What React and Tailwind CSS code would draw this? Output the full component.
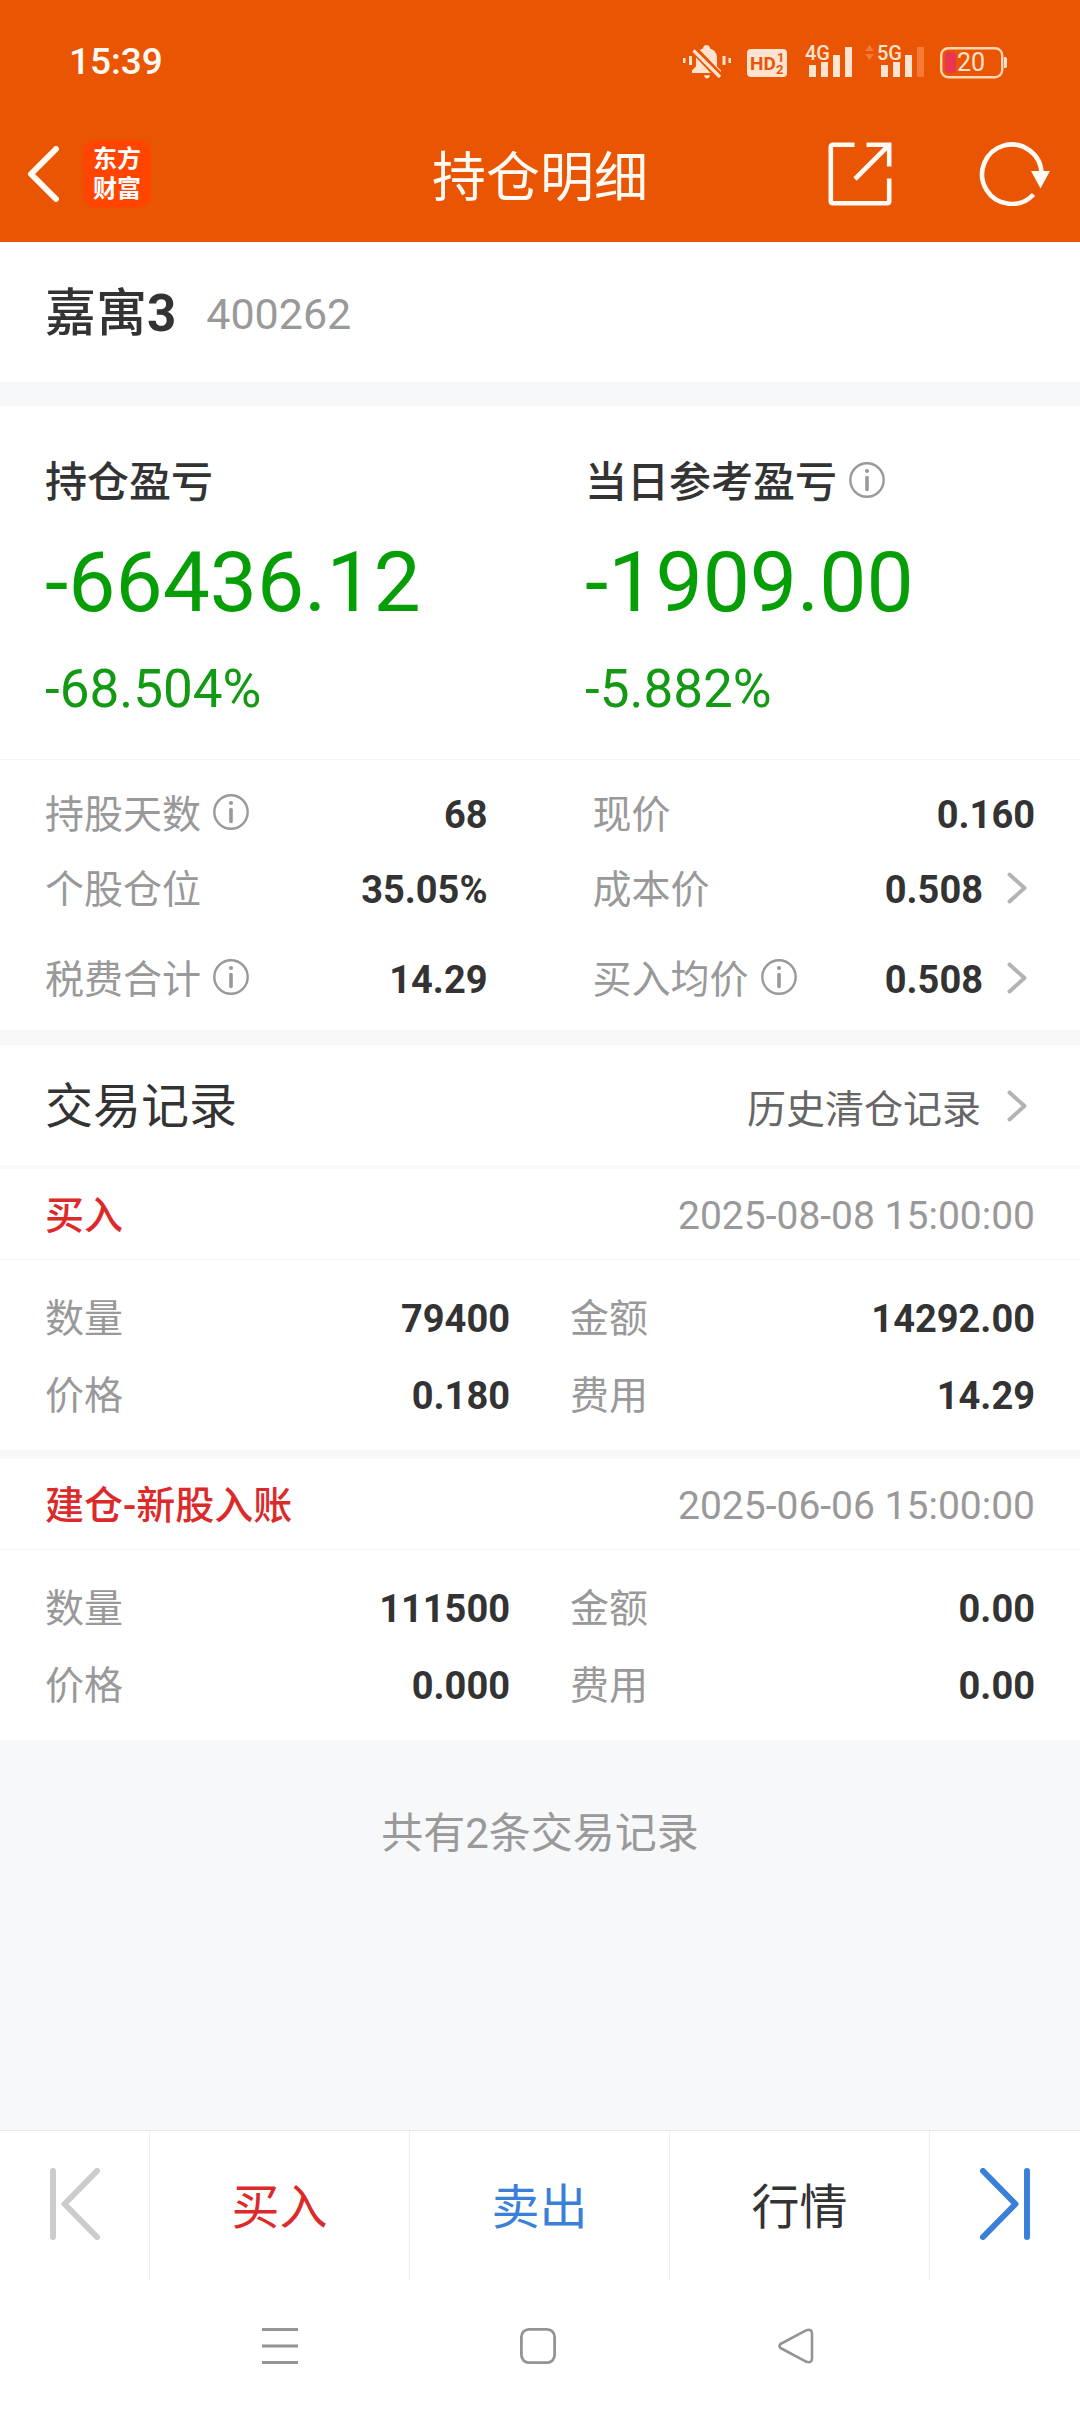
import React from "react";

const stats = [
  [
    { label: "持股天数", info: true, value: "68" },
    { label: "现价", value: "0.160" },
  ],
  [
    { label: "个股仓位", value: "35.05%" },
    { label: "成本价", value: "0.508", more: true },
  ],
  [
    { label: "税费合计", info: true, value: "14.29" },
    { label: "买入均价", info: true, value: "0.508", more: true },
  ],
];

const records = [
  {
    title: "买入",
    time: "2025-08-08 15:00:00",
    fields: [
      ["数量", "79400"],
      ["金额", "14292.00"],
      ["价格", "0.180"],
      ["费用", "14.29"],
    ],
  },
  {
    title: "建仓-新股入账",
    time: "2025-06-06 15:00:00",
    fields: [
      ["数量", "111500"],
      ["金额", "0.00"],
      ["价格", "0.000"],
      ["费用", "0.00"],
    ],
  },
];

function InfoButton({ label }) {
  return (
    <button type="button" aria-label={`${label}说明`} className="shrink-0 pb-[6px]">
      <svg className="block h-9 w-9" viewBox="0 0 36 36" fill="none">
        <circle cx="18" cy="18" r="16.7" stroke="#999" strokeWidth="2.4" />
        <circle cx="18" cy="9" r="2.1" fill="#999" />
        <path d="M18 15.5V27.5" stroke="#999" strokeWidth="3.6" strokeLinecap="round" />
      </svg>
    </button>
  );
}

function Chevron() {
  return (
    <svg className="block h-8 w-[20px] shrink-0" viewBox="0 0 20 32" fill="none">
      <path d="M2.5 2.5L17.5 16L2.5 29.5" stroke="#b3b3b3" strokeWidth="4" strokeLinecap="round" strokeLinejoin="round" />
    </svg>
  );
}

function StatusIcons() {
  return (
    <svg className="block h-[60px] w-[328px]" viewBox="681 32 328 60" fill="#fde3d0">
      <path d="M692 73V70.500l4-4V58c0-5 3-8.500 7-9.500 0-2 1.500-3.500 3.500-3.500s3.500 1.500 3.500 3.500c5 1.500 7 5 7 9.500v8.500l4 4V73z" />
      <path d="M704 75.300h6c-.3 2-1.500 3.200-3 3.200s-2.700-1.200-3-3.200z" />
      <path d="M690 45.500L722 79" stroke="#ea5504" strokeWidth="8" />
      <path d="M693.500 50.500L720 77" stroke="#fde3d0" strokeWidth="3.200" />
      <path d="M683 58h2.500v5H683zM689 56h3v9h-3zM722.500 56h3v9h-3zM728.500 58h2.500v5h-2.500z" />
      <rect x="747" y="49" width="40" height="28" rx="4" />
      <text x="750" y="70" fontSize="19" fontWeight="700" fill="#ea5504">HD</text>
      <text x="777" y="62" fontSize="13" fontWeight="700" fill="#ea5504">1</text>
      <text x="776" y="74" fontSize="13" fontWeight="700" fill="#ea5504">2</text>
      <text x="805" y="60" fontSize="20" fontWeight="500">4G</text>
      <path d="M809 65h7v12h-7zM821 62h7v15h-7zM833 55h7v22h-7zM845 47h7v30h-7z" />
      <path d="M865 51l4.500-6 4.500 6zM865 54l4.500 6 4.500-6z" fill="#f27a3a" />
      <text x="877" y="60" fontSize="20" fontWeight="500">5G</text>
      <path d="M881 65h7v12h-7zM893 62h7v15h-7zM905 55h7v22h-7z" />
      <path d="M917 47h7v30h-7z" fill="#f47a35" />
      <rect x="941.200" y="48.200" width="61" height="29" rx="7" fill="none" stroke="#fdd6b4" strokeWidth="2.400" />
      <rect x="945" y="52" width="11" height="21" rx="4" fill="#ea3550" />
      <path d="M1004 57h1c1.500 0 2 1 2 2v7c0 1-.5 2-2 2h-1z" />
      <text x="957" y="71" fontSize="25">20</text>
    </svg>
  );
}

function Profit({ label, info, amount, percent }) {
  return (
    <div className="flex flex-col items-start px-[45px]">
      <div className="flex h-[60px] items-center gap-3 text-[42px] leading-[60px] font-medium text-[#333]">
        <h2>{label}</h2>
        {info && <InfoButton label={label} />}
      </div>
      <p className="mt-5 text-[84px] leading-[100px] text-[#069e06]">{amount}</p>
      <p className="mt-6 text-[53px] leading-[64px] text-[#139913]">{percent}</p>
    </div>
  );
}

function Stat({ label, info, value, more }) {
  return (
    <div className="flex h-[75px] items-center justify-between">
      <dt className="flex items-center gap-3 text-[#999]">
        {label}
        {info && <InfoButton label={label} />}
      </dt>
      <dd className="flex items-center text-[38px] font-bold text-[#333]">
        {value}
        {more && (
          <button type="button" aria-label={`查看${label}`} className="pr-2 pb-1 pl-6">
            <Chevron />
          </button>
        )}
      </dd>
    </div>
  );
}

function Record({ title, time, fields }) {
  return (
    <article className="bg-white">
      <header className="flex h-[91px] items-center justify-between border-b border-[#f3f4f5] px-[45px] pt-1">
        <h3 className="font-medium text-[#dc2a2a]">{title}</h3>
        <time className="text-[#999]">{time}</time>
      </header>
      <dl className="grid grid-cols-2 gap-x-[60px] px-[45px] pt-5 pb-4">
        {fields.map(([label, value]) => (
          <div key={label} className="flex h-[77px] items-center justify-between">
            <dt className="text-[#999]">{label}</dt>
            <dd className="text-[38px] font-bold text-[#333]">{value}</dd>
          </div>
        ))}
      </dl>
    </article>
  );
}

export default function App() {
  return (
    <div className="flex min-h-screen flex-col bg-[#f6f8fa] font-['Roboto','Noto_Sans_CJK_SC',sans-serif] text-[39px] leading-[56px]">
      <header className="bg-[#ea5504] text-[#fffaf4]">
        <div className="flex h-[124px] items-center justify-between pr-[71px] pl-[69px]">
          <time className="text-[37px] font-medium">15:39</time>
          <StatusIcons />
        </div>
        <div className="grid h-[118px] grid-cols-[1fr_auto_1fr] items-center pb-[18px]">
          <div className="flex items-center gap-[22px] pl-[27px]">
            <button type="button" aria-label="返回">
              <svg className="block h-14 w-[34px]" viewBox="0 0 34 56" fill="none">
                <path d="M29 3L4 28L29 53" stroke="#fffaf4" strokeWidth="6" strokeLinecap="round" strokeLinejoin="round" />
              </svg>
            </button>
            <a
              href="#home"
              className="flex h-[68px] w-[68px] flex-col items-center justify-center rounded-[14px] bg-[#ff4500] text-[24px] leading-[30px] font-bold text-white"
            >
              <span>东方</span>
              <span>财富</span>
            </a>
          </div>
          <h1 className="pt-[10px] text-[54px] leading-[60px]">持仓明细</h1>
          <div className="flex items-center justify-end gap-[87px] pr-[29px]">
            <button type="button" aria-label="分享">
              <svg className="block h-16 w-16" viewBox="0 0 64 64" fill="none" stroke="#fffaf4" strokeWidth="4.600">
                <path d="M26.500 2.800H5Q2.800 2.800 2.800 5V59Q2.800 61.200 5 61.200H59Q61.200 61.200 61.200 59V36.500" />
                <path d="M38.500 2.800H61.200V24.500M60.500 3.500L27 37" />
              </svg>
            </button>
            <button type="button" aria-label="刷新">
              <svg className="block h-16 w-[72px]" viewBox="0 0 72 64" fill="none">
                <path d="M54.500 52.500A29.700 29.700 0 1 1 62.500 32" stroke="#fffaf4" strokeWidth="4.600" />
                <path d="M52 29H71L61.500 46.500Z" fill="#fffaf4" />
              </svg>
            </button>
          </div>
        </div>
      </header>

      <main>
        <section className="flex h-[140px] items-center gap-[30px] bg-white px-[45px] pt-1">
          <h2 className="text-[51px] font-medium text-[#333]">
            嘉寓<span className="font-bold">3</span>
          </h2>
          <span className="text-[43px] text-[#999]">400262</span>
        </section>

        <section className="mt-6 bg-white">
          <div className="grid h-[354px] grid-cols-2 items-start border-b border-[#f3f4f5] pt-[47px]">
            <Profit label="持仓盈亏" amount="-66436.12" percent="-68.504%" />
            <Profit label="当日参考盈亏" info amount="-1909.00" percent="-5.882%" />
          </div>
          <dl className="px-[45px] pt-[17px] pb-[13px]">
            {stats.map((row, i) => (
              <div key={row[0].label} className={i === 2 ? "mt-[15px] grid grid-cols-2 gap-x-[105px]" : "grid grid-cols-2 gap-x-[105px]"}>
                {row.map((item) => (
                  <Stat key={item.label} {...item} />
                ))}
              </div>
            ))}
          </dl>
        </section>

        <section className="mt-[15px]">
          <div className="flex h-[120px] items-center bg-white px-[45px] pt-[6px]">
            <div className="flex flex-1 items-baseline justify-between">
              <h2 className="text-[48px] text-[#333]">交易记录</h2>
              <a href="#history" className="flex items-center gap-[26px] pr-2 text-[#666]">
                历史清仓记录
                <span className="pb-2">
                  <Chevron />
                </span>
              </a>
            </div>
          </div>
          <div className="mt-1 flex flex-col gap-[9px]">
            {records.map((r) => (
              <Record key={r.time} {...r} />
            ))}
          </div>
        </section>

        <p className="pt-[66px] text-center text-[42px] text-[#999]">共有2条交易记录</p>
      </main>

      <footer className="mt-auto bg-white">
        <div className="grid h-[150px] grid-cols-[150fr_260fr_260fr_260fr_150fr] divide-x divide-[#eceeef] border-t border-[#e6e9ec] text-[48px]">
          <button type="button" aria-label="上一个" className="flex items-center justify-center pb-1">
            <svg className="block h-[72px] w-[50px]" viewBox="0 0 50 72" fill="none" stroke="#ccc" strokeWidth="6" strokeLinecap="round" strokeLinejoin="round">
              <path d="M3 3V69M47 3L14.500 36L47 69" />
            </svg>
          </button>
          <button type="button" className="pt-1 text-[#dc2a2a]">买入</button>
          <button type="button" className="pt-1 text-[#3a80d8]">卖出</button>
          <button type="button" className="pt-1 text-[#333]">行情</button>
          <button type="button" aria-label="下一个" className="flex items-center justify-center pb-1">
            <svg className="block h-[72px] w-[50px]" viewBox="0 0 50 72" fill="none" stroke="#3a80d8" strokeWidth="6" strokeLinecap="round" strokeLinejoin="round">
              <path d="M47 3V69M3 3L35.500 36L3 69" />
            </svg>
          </button>
        </div>
        <nav className="grid h-[132px] grid-cols-3 items-center justify-items-center pr-[155px] pl-[151px]">
          <button type="button" aria-label="最近任务">
            <svg className="block h-9 w-9" viewBox="0 0 36 36" stroke="#949494" strokeWidth="3">
              <path d="M0 1.500H36M0 18H36M0 34.500H36" />
            </svg>
          </button>
          <button type="button" aria-label="主屏幕">
            <svg className="block h-9 w-9" viewBox="0 0 36 36" fill="none" stroke="#949494" strokeWidth="2.800">
              <rect x="1.400" y="1.400" width="33.200" height="33.200" rx="7.500" />
            </svg>
          </button>
          <button type="button" aria-label="系统返回">
            <svg className="block h-9 w-9" viewBox="0 0 36 36" fill="none" stroke="#949494" strokeWidth="2.600" strokeLinejoin="round">
              <path d="M2.500 16L28.500 2.200Q34 .5 34 6V30Q34 35.500 28.500 33.800L2.500 20Q.5 18 2.500 16Z" />
            </svg>
          </button>
        </nav>
      </footer>
    </div>
  );
}
